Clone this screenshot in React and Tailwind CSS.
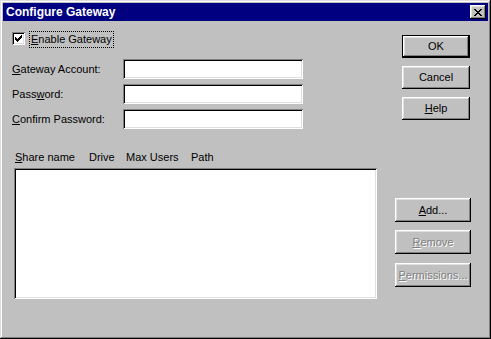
const raised =
  'shadow-[inset_-1px_-1px_#000,inset_1px_1px_#fff,inset_-2px_-2px_#808080,inset_2px_2px_#dfdfdf]';
const sunken =
  'shadow-[inset_1px_1px_#808080,inset_-1px_-1px_#fff,inset_2px_2px_#000,inset_-2px_-2px_#dfdfdf]';

const Btn = ({ children, def, disabled, className = '' }) => {
  const face = (
    <div
      className={`flex items-center justify-center bg-[#c0c0c0] ${raised} ${
        def ? 'h-[21px] w-[66px]' : 'h-full w-full'
      } ${disabled ? 'text-[#808080] [text-shadow:1px_1px_0_#fff]' : 'text-black'}`}
    >
      {children}
    </div>
  );
  if (def) {
    return <div className={`border border-black ${className}`}>{face}</div>;
  }
  return <div className={className}>{face}</div>;
};

const Field = ({ label, className = '' }) => (
  <div className={`flex h-[20px] items-center ${className}`}>
    <span className="w-[111px]">{label}</span>
    <div className={`h-[20px] w-[180px] bg-white ${sunken}`} />
  </div>
);

const App = () => {
  return (
    <div
      className={`flex h-[339px] w-[491px] flex-col bg-[#c0c0c0] p-[3px] text-[11px] leading-[13px] text-black shadow-[inset_-1px_-1px_#000,inset_1px_1px_#dfdfdf,inset_-2px_-2px_#808080,inset_2px_2px_#fff]`}
      style={{ fontFamily: '"Liberation Sans", Arial, sans-serif' }}
    >
      <div className="flex h-[18px] items-center justify-between bg-[#000080] pl-[3px] pr-[2px]">
        <span className="text-[12px] font-bold text-white">Configure Gateway</span>
        <div className={`flex h-[14px] w-[16px] items-center justify-center bg-[#c0c0c0] ${raised}`}>
          <svg width="8" height="7" viewBox="0 0 8 7" shapeRendering="crispEdges">
            <path
              d="M0 0h2v1h-2zM6 0h2v1h-2zM1 1h2v1h-2zM5 1h2v1h-2zM2 2h4v1h-4zM3 3h2v1h-2zM2 4h4v1h-4zM1 5h2v1h-2zM5 5h2v1h-2zM0 6h2v1h-2zM6 6h2v1h-2z"
              fill="#000"
            />
          </svg>
        </div>
      </div>

      <div className="flex flex-1">
        <div className="flex w-[392px] flex-col pl-[9px]">
          <div className="mt-[10px] flex h-[17px] items-start">
            <div className={`mt-[1px] flex h-[13px] w-[13px] items-center justify-center bg-white ${sunken}`}>
              <svg width="7" height="7" viewBox="0 0 7 7" shapeRendering="crispEdges">
                <path
                  d="M6 0h1v3h-1zM5 1h1v3h-1zM4 2h1v3h-1zM3 3h1v3h-1zM2 4h1v3h-1zM1 3h1v3h-1zM0 2h1v3h-1z"
                  fill="#000"
                />
              </svg>
            </div>
            <div className="ml-[4px] flex h-[17px] items-center border border-dotted border-black px-[1px]">
              <span>
                <u>E</u>nable Gateway
              </span>
            </div>
          </div>

          <Field
            className="mt-[11px]"
            label={
              <>
                <u>G</u>ateway Account:
              </>
            }
          />
          <Field
            className="mt-[5px]"
            label={
              <>
                Pass<u>w</u>ord:
              </>
            }
          />
          <Field
            className="mt-[5px]"
            label={
              <>
                <u>C</u>onfirm Password:
              </>
            }
          />

          <div className="mt-[22px] flex h-[15px] items-start pl-[3px]">
            <span className="w-[74px]">
              <u>S</u>hare name
            </span>
            <span className="w-[37px]">Drive</span>
            <span className="w-[65px]">Max Users</span>
            <span>Path</span>
          </div>
          <div className={`ml-[2px] mt-[2px] h-[131px] w-[363px] bg-white ${sunken}`} />
        </div>

        <div className="flex flex-col">
          <Btn def className="ml-[7px] mt-[14px] w-[68px]">
            OK
          </Btn>
          <Btn className="ml-[7px] mt-[8px] h-[23px] w-[68px]">Cancel</Btn>
          <Btn className="ml-[7px] mt-[8px] h-[23px] w-[68px]">
            <span>
              <u>H</u>elp
            </span>
          </Btn>
          <Btn className="mt-[78px] h-[24px] w-[76px]">
            <span>
              <u>A</u>dd...
            </span>
          </Btn>
          <Btn disabled className="mt-[8px] h-[24px] w-[76px]">
            <span>
              <u>R</u>emove
            </span>
          </Btn>
          <Btn disabled className="mt-[9px] h-[24px] w-[76px]">
            <span>
              <u>P</u>ermissions...
            </span>
          </Btn>
        </div>
      </div>
    </div>
  );
};

export default App;
